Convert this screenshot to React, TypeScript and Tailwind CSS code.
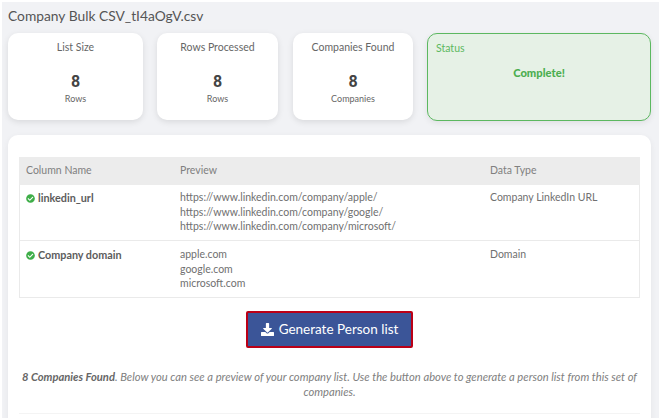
import React from "react";

const font = "font-['Lato','Open_Sans',sans-serif]";

function Stat({ label, unit, className }: { label: string; unit: string; className: string }) {
  return (
    <div className={`${className} h-[87px] rounded-[10px] bg-white shadow-[0_2px_6px_rgba(0,0,0,0.1)] flex flex-col items-center pt-[7px] text-[#666]`}>
      <div className="text-[10.5px] leading-[14px]">{label}</div>
      <div className="mt-[18px] text-[16px] leading-[20px] font-bold font-['Roboto',sans-serif] text-[#444]">8</div>
      <div className="text-[9px] leading-[12px] mt-[1px]">{unit}</div>
    </div>
  );
}

function Check() {
  return (
    <svg viewBox="0 0 512 512" className="w-[9px] h-[9px] shrink-0 mt-[1px]" fill="#3fae49">
      <path d="M504 256c0 137-111 248-248 248S8 393 8 256 119 8 256 8s248 111 248 248zM227 387l184-184c6-6 6-16 0-23l-23-22c-6-6-16-6-22 0L216 308l-70-70c-6-6-16-6-22 0l-23 23c-6 6-6 16 0 22l104 104c6 6 16 6 22 0z" />
    </svg>
  );
}

function DownloadIcon() {
  return (
    <svg viewBox="0 0 512 512" className="w-[13px] h-[13px] shrink-0" fill="#fff">
      <path d="M216 0h80c13 0 24 11 24 24v168h88c18 0 27 22 14 34L270 378c-8 8-20 8-28 0L90 226c-13-12-4-34 14-34h88V24c0-13 11-24 24-24zm296 376v112c0 13-11 24-24 24H24c-13 0-24-11-24-24V376c0-13 11-24 24-24h147l49 49c20 20 52 20 72 0l49-49h147c13 0 24 11 24 24z" />
    </svg>
  );
}

function Row({ name, preview, type, className }: { name: string; preview: string[]; type: string; className: string }) {
  return (
    <div className={`grid grid-cols-[154px_310px_1fr] pl-[6px] ${className}`}>
      <div className="flex items-center gap-[3px] h-[16px] text-[10.8px] font-bold text-[#5c5c5c]">
        <Check />
        <span>{name}</span>
      </div>
      <div className="text-[10.5px] leading-[14.6px] text-[#707070]">
        {preview.map((p) => (
          <div key={p}>{p}</div>
        ))}
      </div>
      <div className="text-[10.5px] leading-[14.6px] text-[#707070]">{type}</div>
    </div>
  );
}

export default function App() {
  return (
    <div className={`${font} w-[659px] h-[418px] overflow-hidden bg-white pt-[2px] pl-[2px]`}>
      <div className="h-full bg-[#f1f2f5] pl-[6px] pr-[8px] flex flex-col">
        <h1 className="text-[13.8px] leading-[18px] text-[#555] mt-[5px]">Company Bulk CSV_tI4aOgV.csv</h1>
        <div className="flex mt-[8px]">
          <Stat className="w-[135px]" label="List Size" unit="Rows" />
          <Stat className="w-[121px] ml-[14px]" label="Rows Processed" unit="Rows" />
          <Stat className="w-[120px] ml-[15px]" label="Companies Found" unit="Companies" />
          <div className="w-[224px] ml-[14px] h-[88px] rounded-[10px] border border-[#5cb860] bg-[#e6f1e6] shadow-[0_2px_6px_rgba(0,0,0,0.08)] px-[8px] pt-[7px]">
            <div className="text-[10.5px] leading-[14px] text-[#5cb860]">Status</div>
            <div className="mt-[11px] text-center text-[11.2px] leading-[14px] font-black text-[#4cae50]">Complete!</div>
          </div>
        </div>
        <div className="mt-[14px] flex-1 rounded-t-[10px] bg-white px-[11px] pt-[22px] shadow-[0_2px_6px_rgba(0,0,0,0.06)]">
          <div className="border border-[#eaeaea] border-t-0">
            <div className="grid grid-cols-[154px_310px_1fr] pl-[7px] h-[28px] items-center bg-[#ececec] text-[10.5px] text-[#808080] -mx-px">
              <div>Column Name</div>
              <div>Preview</div>
              <div>Data Type</div>
            </div>
            <Row
              className="h-[56px] pt-[5px] border-b border-[#eaeaea]"
              name="linkedin_url"
              type="Company LinkedIn URL"
              preview={[
                "https://www.linkedin.com/company/apple/",
                "https://www.linkedin.com/company/google/",
                "https://www.linkedin.com/company/microsoft/",
              ]}
            />
            <Row className="h-[56px] pt-[6px]" name="Company domain" type="Domain" preview={["apple.com", "google.com", "microsoft.com"]} />
          </div>
          <div className="flex justify-center mt-[13px]">
            <button className="w-[167px] h-[37px] rounded-[2px] border-2 border-[#bb0016] bg-[#3b5598] text-white text-[13.5px] flex items-center justify-center gap-[5px]">
              <DownloadIcon />
              Generate Person list
            </button>
          </div>
          <p className="mt-[22px] text-center italic text-[11.2px] leading-[14.5px] text-[#808080] -mx-[2px]">
            <b className="text-[#666]">8 Companies Found</b>. Below you can see a preview of your company list. Use the button above to generate a person list from this set of companies.
          </p>
          <div className="mt-[14px] h-[10px] border-t border-[#f4f4f4]" />
        </div>
      </div>
    </div>
  );
}
